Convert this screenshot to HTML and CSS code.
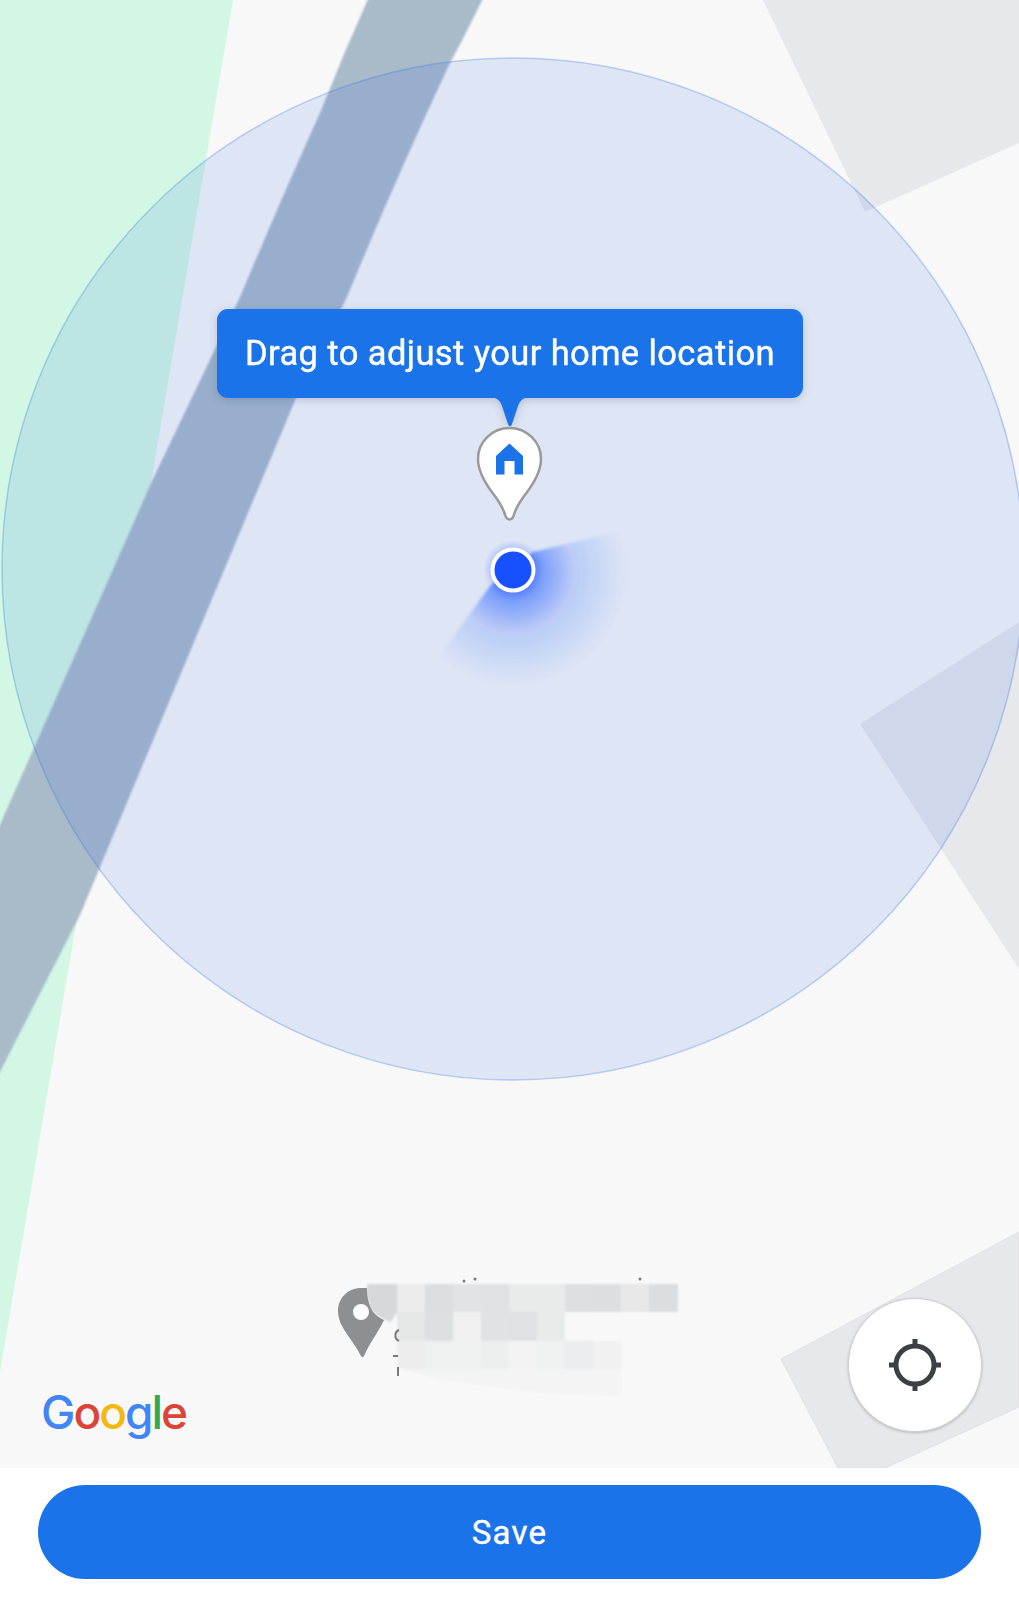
FILE: index.html
```html
<!DOCTYPE html>
<html lang="en">
<head>
<meta charset="utf-8">
<title>Home location</title>
<link rel="stylesheet" href="styles.css">
</head>
<body>
<main class="page">
  <section class="map">
    <svg class="map-canvas" width="1019" height="1468" viewBox="0 0 1019 1468">
      <defs>
        <radialGradient id="beam" gradientUnits="userSpaceOnUse" cx="513" cy="572" r="114">
          <stop offset="0" stop-color="#1a56ff" stop-opacity=".9"/>
          <stop offset=".27" stop-color="#1a56ff" stop-opacity=".48"/>
          <stop offset=".55" stop-color="#1a56ff" stop-opacity=".17"/>
          <stop offset="1" stop-color="#1a56ff" stop-opacity="0"/>
        </radialGradient>
        <radialGradient id="halo" gradientUnits="userSpaceOnUse" cx="513" cy="570" r="30">
          <stop offset=".7" stop-color="#1a56ff" stop-opacity=".22"/>
          <stop offset="1" stop-color="#1a56ff" stop-opacity="0"/>
        </radialGradient>
        <filter id="soft" x="-20%" y="-20%" width="140%" height="140%"><feGaussianBlur stdDeviation="1.5"/></filter>
        <filter id="softer" x="-20%" y="-20%" width="140%" height="140%"><feGaussianBlur stdDeviation=".8"/></filter>
      </defs>
      <path class="park" d="M0 0H233L0 1372Z"/>
      <path class="block" d="M763 0L865 212L1019 143V0Z"/>
      <path class="block" d="M860 724L1019 969V622Z"/>
      <path class="block block-edge" d="M781 1359L838 1468H885L1019 1407V1232Z"/>
      <path class="road" filter="url(#softer)" d="M372 -10H487Q468 30 450 63Q395 180 347 297L296 398L80 915L-20 1111V870L153 479L240 297Q285 190 320 113Q345 50 372 -10Z"/>
      <circle class="accuracy" cx="513" cy="569" r="511"/>
      <path filter="url(#soft)" fill="url(#beam)" d="M533 552L660 522L680 640L540 720L412 695L490 586Z"/>
      <circle cx="513" cy="570" r="30" fill="url(#halo)"/>
      <circle class="dot" cx="513" cy="570" r="20.5"/>

      <g class="mosaic" filter="url(#softer)">
        <path fill="#d6d8da" d="M367 1284H397V1312L391 1322C378 1318 367 1310 367 1296Z"/>
        <rect x="397" y="1284" width="28" height="28" fill="#ebebeb"/>
        <rect x="425" y="1284" width="28" height="28" fill="#dcdedf"/>
        <rect x="453" y="1284" width="28" height="28" fill="#e1e3e4"/>
        <rect x="481" y="1284" width="28" height="28" fill="#dfe1e2"/>
        <rect x="509" y="1284" width="28" height="28" fill="#e9ebea"/>
        <rect x="537" y="1284" width="28" height="28" fill="#e9ebeb"/>
        <rect x="565" y="1284" width="28" height="28" fill="#dddfe0"/>
        <rect x="593" y="1284" width="28" height="28" fill="#dcdee0"/>
        <rect x="621" y="1284" width="28" height="28" fill="#e8e8e8"/>
        <rect x="649" y="1284" width="29" height="28" fill="#dcdddf"/>
        <rect x="397" y="1312" width="28" height="29" fill="#e5e6e6"/>
        <rect x="425" y="1312" width="28" height="29" fill="#dddfe0"/>
        <rect x="453" y="1312" width="28" height="29" fill="#eff0ef"/>
        <rect x="481" y="1312" width="28" height="29" fill="#e0e2e3"/>
        <rect x="509" y="1312" width="28" height="29" fill="#dfe1e2"/>
        <rect x="537" y="1312" width="28" height="29" fill="#e9ebeb"/>
        <rect x="397" y="1341" width="28" height="28" fill="#ecedec"/>
        <rect x="425" y="1341" width="56" height="28" fill="#eff0f0"/>
        <rect x="481" y="1341" width="28" height="28" fill="#edefee"/>
        <rect x="509" y="1341" width="28" height="28" fill="#f3f3f3"/>
        <rect x="537" y="1341" width="28" height="28" fill="#f0f1f1"/>
        <rect x="565" y="1341" width="28" height="28" fill="#ecedee"/>
        <rect x="593" y="1341" width="29" height="28" fill="#f1f1f2"/>
        <path fill="#f3f4f3" d="M400 1369H622V1397L540 1393L440 1380Z"/>
      </g>
      <path class="poi" d="M361 1288C348 1288 338 1298 338 1311C338 1327 352 1338 361 1356C363 1358 363 1358 365 1354C370 1342 378 1333 384 1320C376 1316 367 1310 367 1288Z"/>
      <circle class="poi-hole" cx="361" cy="1312" r="8"/>
      <path class="poi-crumb" d="M399 1330A6 6 0 0 0 399 1341M393 1356H398M398 1367V1376"/>
      <circle class="poi-crumb-dot" cx="464" cy="1281" r="1.5"/>
      <circle class="poi-crumb-dot" cx="475" cy="1279" r="1.5"/>
      <circle class="poi-crumb-dot" cx="640" cy="1279" r="1.5"/>
    </svg>

    <div class="tooltip">
      <div class="tooltip-bubble">Drag to adjust your home location</div>
      <svg class="tooltip-arrow" width="44" height="30" viewBox="0 0 44 30"><path d="M0 0H44C36 0 32 3 30 9L24 27C23 30 21 30 20 27L14 9C12 3 8 0 0 0Z"/></svg>
    </div>

    <svg class="home-pin" width="69" height="96" viewBox="0 0 69 96">
      <path class="home-pin-body" d="M34.500 2C52 2 66 16 66 33C66 46 59 57 51 67.500C46 74 41 81 38.500 90C37.200 94.500 31.800 94.500 30.500 90C28 81 23 74 18 67.500C10 57 3 46 3 33C3 16 17 2 34.500 2Z"/>
      <path class="home-pin-icon" d="M34.500 17.500L48 30V48.500H39.500V35H29.500V48.500H21V30Z"/>
    </svg>

    <div class="google-logo"><span class="g-blue">G</span><span class="g-red">o</span><span class="g-yellow">o</span><span class="g-blue">g</span><span class="g-green">l</span><span class="g-red">e</span></div>

    <button class="locate" type="button" aria-label="My location">
      <svg width="54" height="54" viewBox="0 0 54 54"><circle cx="27" cy="27" r="19" class="locate-ring"/><path class="locate-ticks" d="M27 1V9M27 45V53M1 27H9M45 27H53"/></svg>
    </button>
  </section>
  <footer class="actions">
    <button class="save" type="button">Save</button>
  </footer>
</main>
</body>
</html>
```

FILE: styles.css
```css
* { box-sizing: border-box; }

html, body {
  margin: 0;
  background: #ffffff;
}

.page {
  width: 1019px;
  height: 1599px;
  display: flex;
  flex-direction: column;
  font-family: Roboto, "Liberation Sans", sans-serif;
}

.map {
  position: relative;
  height: 1468px;
  overflow: hidden;
  background: #f8f8f8;
}

.map-canvas {
  position: absolute;
  inset: 0;
  display: block;
}

.park { fill: #d2f7e4; }
.block { fill: #e7e8ec; }
.block-edge { stroke: #e0e1e5; stroke-width: 1; }
.road { fill: #a9bac9; }

.accuracy {
  fill: rgba(26, 86, 232, 0.115);
  stroke: rgba(60, 120, 225, 0.32);
  stroke-width: 1.5;
}

.dot {
  fill: #1650ff;
  stroke: #ffffff;
  stroke-width: 4;
}

.poi { fill: #8d9093; }
.poi-hole { fill: #ffffff; }
.poi-crumb { fill: none; stroke: #77797c; stroke-width: 2; }
.poi-crumb-dot { fill: #77797c; }

.tooltip {
  position: absolute;
  left: 217px;
  top: 309px;
  width: 586px;
  display: flex;
  flex-direction: column;
  align-items: center;
  filter: drop-shadow(0 2px 4px rgba(40, 60, 100, 0.22));
}

.tooltip-bubble {
  width: 100%;
  height: 89px;
  display: flex;
  align-items: center;
  justify-content: center;
  padding-bottom: 2px;
  border-radius: 11px;
  background: #1a73e8;
  color: #ffffff;
  font-size: 34.500px;
  letter-spacing: 0.4px;
  -webkit-text-stroke: 0.4px #ffffff;
  white-space: nowrap;
}

.tooltip-arrow {
  display: block;
  margin-top: -1px;
  margin-left: -1px;
  fill: #1a73e8;
}

.home-pin {
  position: absolute;
  left: 475px;
  top: 426px;
  display: block;
}

.home-pin-body {
  fill: #ffffff;
  stroke: #9a9a9a;
  stroke-width: 2.5;
}

.home-pin-icon { fill: #1a73e8; }

.google-logo {
  position: absolute;
  left: 41px;
  top: 1380px;
  font-family: Inter, Roboto, sans-serif;
  font-size: 46px;
  font-weight: 500;
  line-height: 64px;
  letter-spacing: -2px;
  text-shadow: 0 0 3px #ffffff;
}

.g-blue { color: #4285f4; }
.g-red { color: #db4437; }
.g-yellow { color: #f4b811; }
.g-green { color: #34a853; }

.locate {
  position: absolute;
  left: 848px;
  top: 1298px;
  width: 134px;
  height: 134px;
  display: flex;
  align-items: center;
  justify-content: center;
  padding: 0;
  border: 1px solid #d0d0d0;
  border-radius: 50%;
  background: #ffffff;
  box-shadow: 0 1px 3px rgba(0, 0, 0, 0.2);
}

.locate svg { display: block; }
.locate-ring { fill: none; stroke: #3c4043; stroke-width: 5; }
.locate-ticks { fill: none; stroke: #3c4043; stroke-width: 5; }

.actions {
  flex: 1;
  padding: 17px 38px 20px;
}

.save {
  display: block;
  width: 100%;
  height: 94px;
  padding: 0;
  border: 0;
  border-radius: 47px;
  background: #1a73e8;
  color: #ffffff;
  font-family: Roboto, "Liberation Sans", sans-serif;
  font-size: 33px;
  letter-spacing: 1.200px;
  -webkit-text-stroke: 0.4px #ffffff;
}
```
